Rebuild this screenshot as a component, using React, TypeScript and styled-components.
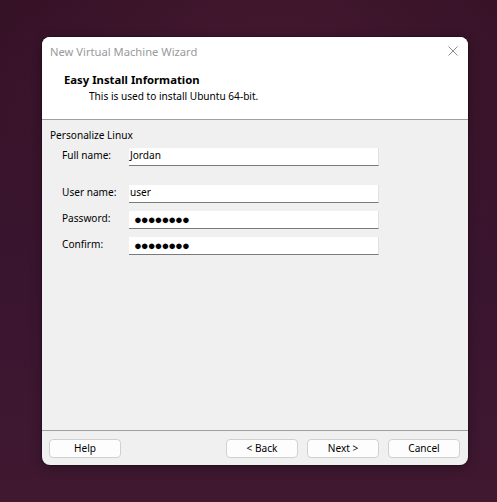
import React from "react";
import styled, { createGlobalStyle } from "styled-components";

const Global = createGlobalStyle`
  html, body { margin: 0; padding: 0; }
  body {
    width: 497px;
    height: 502px;
    overflow: hidden;
    font-family: "Noto Sans", "Open Sans", sans-serif;
    font-size: 10.1px;
    color: #000;
  }
`;

const Desktop = styled.div`
  width: 497px;
  height: 502px;
  box-sizing: border-box;
  padding: 37px 0 0 42px;
  background:
    radial-gradient(ellipse 70% 55% at 55% 12%, #43182f 0%, rgba(67, 24, 47, 0) 100%),
    linear-gradient(180deg, #321024 0%, #3a1530 55%, #401830 100%);
`;

const Window = styled.div`
  width: 426px;
  height: 428px;
  border-radius: 8px;
  overflow: hidden;
  background: #f0f0f0;
  display: flex;
  flex-direction: column;
  box-shadow: 0 0 0 1px rgba(0, 0, 0, 0.22), 0 3px 12px rgba(0, 0, 0, 0.3);
`;

const Header = styled.div`
  height: 82px;
  background: #ffffff;
  border-bottom: 1px solid #a0a0a0;
  display: flex;
  flex-direction: column;
`;

const TitleBar = styled.div`
  display: flex;
  align-items: flex-start;
  justify-content: space-between;
  padding: 7px 10px 0 8px;
`;

const TitleText = styled.span`
  color: #9a9a9a;
  font-size: 11.2px;
  line-height: 16px;
`;

const CloseIcon = styled.svg`
  width: 10px;
  height: 10px;
  margin-top: 2px;
`;

const HeadingBlock = styled.div`
  padding: 12px 0 0 22px;
  display: flex;
  flex-direction: column;
`;

const Heading = styled.div`
  font-weight: 700;
  font-size: 11.3px;
  line-height: 16px;
`;

const SubHeading = styled.div`
  padding-left: 25px;
  line-height: 16px;
`;

const Body = styled.div`
  flex: 1;
  padding: 7px 0 0 8px;
  display: flex;
  flex-direction: column;
`;

const GroupTitle = styled.div`
  line-height: 16px;
`;

const Form = styled.div`
  display: grid;
  grid-template-columns: 67px 250px;
  grid-template-rows: 29px 18px 18px 18px;
  row-gap: 8px;
  align-items: start;
  padding: 5px 0 0 12px;
`;

const Label = styled.label`
  line-height: 15px;
`;

const Field = styled.div`
  height: 18px;
  box-sizing: border-box;
  background: #fff;
  border-right: 1px solid #e2e2e2;
  border-bottom: 1px solid #7a7a7a;
  padding: 0 0 2px 1px;
  line-height: 15px;
  display: flex;
  align-items: flex-start;
  white-space: nowrap;
`;

const Dots = styled.span`
  font-size: 13px;
  letter-spacing: -1px;
  line-height: 16px;
  margin-left: 4px;
`;

const Footer = styled.div`
  height: 35px;
  border-top: 1px solid #a0a0a0;
  box-sizing: border-box;
  padding: 8px 8px 0 7px;
  display: flex;
  align-items: flex-start;
  gap: 9px;
`;

const Button = styled.button<{ $pushRight?: boolean }>`
  width: 72px;
  height: 19px;
  box-sizing: border-box;
  background: #fdfdfd;
  border: 1px solid #d0d0d0;
  border-radius: 4px;
  font-family: inherit;
  font-size: 10.1px;
  color: #000;
  padding: 0;
  line-height: 17px;
  margin-left: ${(p) => (p.$pushRight ? "auto" : "0")};
`;

export default function App() {
  return (
    <>
      <Global />
      <Desktop>
        <Window>
          <Header>
            <TitleBar>
              <TitleText>New Virtual Machine Wizard</TitleText>
              <CloseIcon viewBox="0 0 10 10">
                <path d="M0.5 0.5 L9.5 9.5 M9.5 0.5 L0.5 9.5" stroke="#8c8c8c" strokeWidth="1" />
              </CloseIcon>
            </TitleBar>
            <HeadingBlock>
              <Heading>Easy Install Information</Heading>
              <SubHeading>This is used to install Ubuntu 64-bit.</SubHeading>
            </HeadingBlock>
          </Header>
          <Body>
            <GroupTitle>Personalize Linux</GroupTitle>
            <Form>
              <Label>Full name:</Label>
              <Field>Jordan</Field>
              <Label>User name:</Label>
              <Field>user</Field>
              <Label>Password:</Label>
              <Field>
                <Dots>●●●●●●●●</Dots>
              </Field>
              <Label>Confirm:</Label>
              <Field>
                <Dots>●●●●●●●●</Dots>
              </Field>
            </Form>
          </Body>
          <Footer>
            <Button>Help</Button>
            <Button $pushRight>&lt; Back</Button>
            <Button>Next &gt;</Button>
            <Button>Cancel</Button>
          </Footer>
        </Window>
      </Desktop>
    </>
  );
}
